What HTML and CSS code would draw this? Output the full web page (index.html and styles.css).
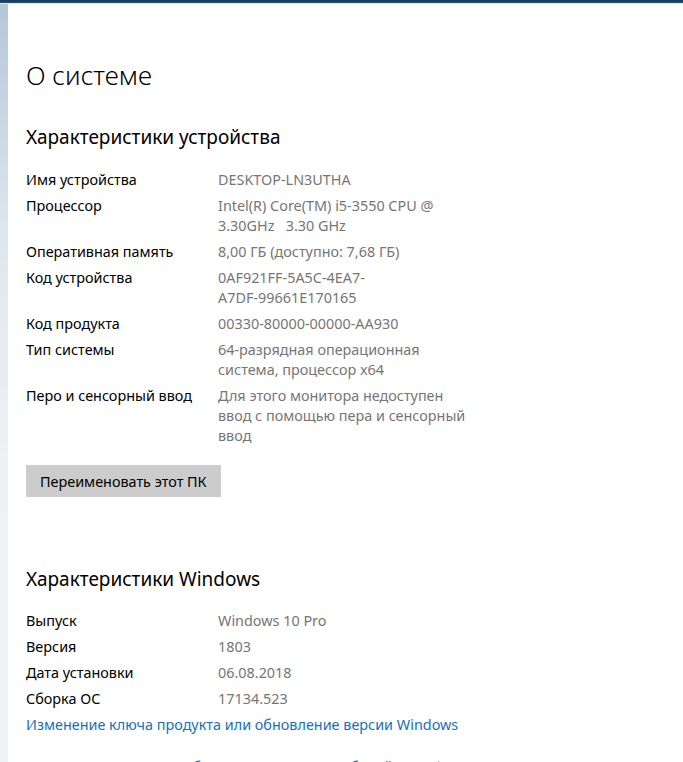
FILE: index.html
```html
<!DOCTYPE html>
<html lang="ru">
<head>
  <meta charset="UTF-8">
  <title>О системе</title>
  <link rel="stylesheet" href="styles.css">
</head>
<body>

<div class="topbar"></div>

<div class="window">
  <div class="edge"></div>

  <div class="content">
    <h1 class="page-title">О системе</h1>

    <h2 class="section-title">Характеристики устройства</h2>
    <div class="specs">
      <div class="label">Имя устройства</div>
      <div class="value">DESKTOP-LN3UTHA</div>

      <div class="label">Процессор</div>
      <div class="value">Intel(R) Core(TM) i5-3550 CPU @ 3.30GHz&nbsp;&nbsp; 3.30 GHz</div>

      <div class="label">Оперативная память</div>
      <div class="value">8,00 ГБ (доступно: 7,68 ГБ)</div>

      <div class="label">Код устройства</div>
      <div class="value">0AF921FF-5A5C-4EA7-<br>A7DF-99661E170165</div>

      <div class="label">Код продукта</div>
      <div class="value">00330-80000-00000-AA930</div>

      <div class="label">Тип системы</div>
      <div class="value">64-разрядная операционная система, процессор x64</div>

      <div class="label">Перо и сенсорный ввод</div>
      <div class="value">Для этого монитора недоступен ввод с помощью пера и сенсорный ввод</div>
    </div>

    <button class="rename-btn">Переименовать этот ПК</button>

    <h2 class="section-title second">Характеристики Windows</h2>
    <div class="specs">
      <div class="label">Выпуск</div>
      <div class="value">Windows 10 Pro</div>

      <div class="label">Версия</div>
      <div class="value">1803</div>

      <div class="label">Дата установки</div>
      <div class="value">06.08.2018</div>

      <div class="label">Сборка ОС</div>
      <div class="value">17134.523</div>
    </div>

    <a class="link" href="#">Изменение ключа продукта или обновление версии Windows</a>
    <a class="link next" href="#">Прочтите соглашение об использовании служб Майкрософт, которое применяется к нашим службам</a>
  </div>
</div>

</body>
</html>
```

FILE: styles.css
```css
html, body {
  margin: 0;
  padding: 0;
  height: 100%;
  overflow: hidden;
  background: #ffffff;
}

body {
  font-family: "Segoe UI", "Noto Sans", "Open Sans", sans-serif;
  color: #000000;
}

.topbar {
  height: 3px;
  background: linear-gradient(to bottom, #163452, #2b5378);
  border-bottom: 1px solid #d9e6f0;
}

.window {
  display: flex;
  min-height: 100%;
}

.edge {
  width: 8px;
  flex: none;
  background: linear-gradient(to bottom, #b4c7d9 0%, #dfe7ee 30%, #eef1f4 60%, #f1f2f4 100%);
}

.content {
  flex: 1;
  padding-left: 18px;
}

.page-title {
  font-size: 26px;
  font-weight: 300;
  line-height: 36px;
  margin: 53px 0 30px 0;
}

.section-title {
  font-size: 19px;
  font-weight: 400;
  line-height: 28px;
  margin: 0 0 19px 0;
}

.section-title.second {
  margin-top: 68px;
  margin-bottom: 18px;
}

.specs {
  display: grid;
  grid-template-columns: 192px 254px;
  row-gap: 6px;
  font-size: 14.4px;
  line-height: 20px;
}

.label {
  color: #000000;
}

.value {
  color: #767676;
}

.rename-btn {
  display: block;
  margin-top: 19px;
  height: 32px;
  padding: 0 14px;
  background-color: #cccccc;
  border: none;
  font-family: inherit;
  font-size: 14.4px;
  color: #000000;
}

.link {
  display: block;
  margin-top: 6px;
  font-size: 14.4px;
  line-height: 20px;
  color: #1b6fb8;
  text-decoration: none;
}

.link.next {
  margin-top: 22px;
  white-space: nowrap;
}
```
